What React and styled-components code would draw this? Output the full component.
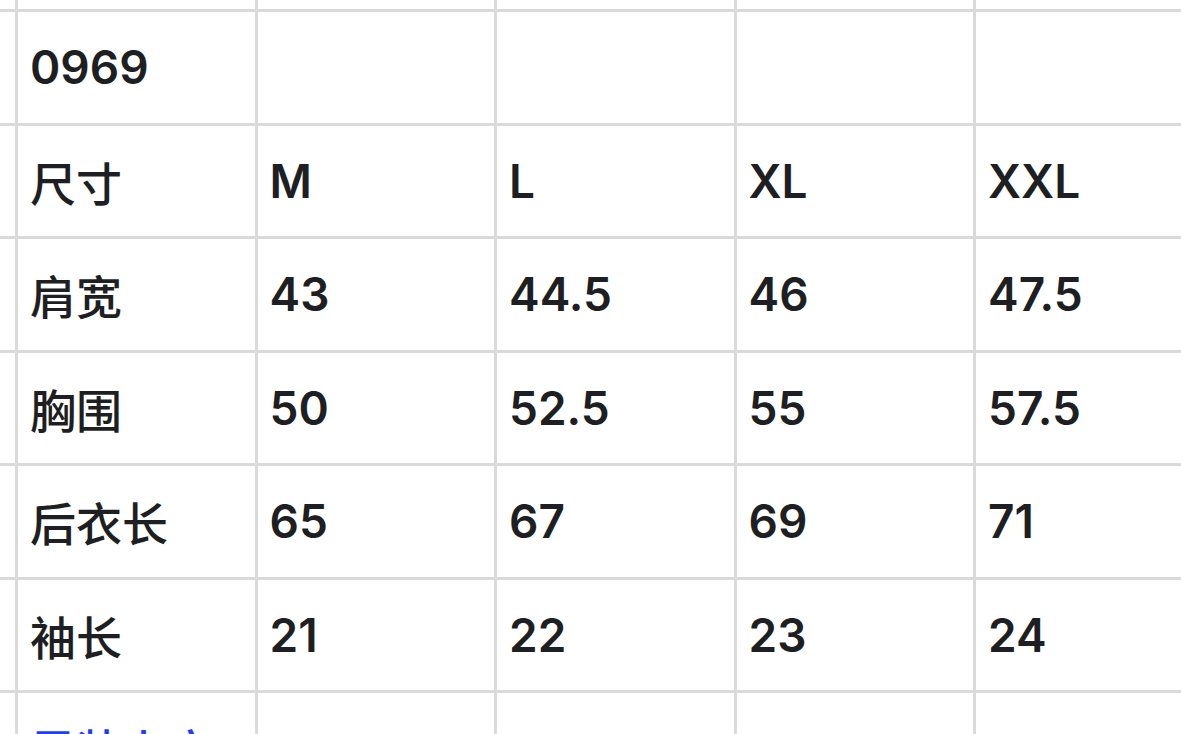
import styled, { createGlobalStyle } from 'styled-components';

const GlobalStyle = createGlobalStyle`
  html, body {
    margin: 0;
    padding: 0;
    background: #ffffff;
    overflow: hidden;
  }
  body {
    font-family: Inter, "Noto Sans CJK SC", sans-serif;
  }
`;

const rows = [
  { head: '', cells: ['', '', '', ''], partial: true },
  { head: '0969', cells: ['', '', '', ''] },
  { head: '尺寸', cells: ['M', 'L', 'XL', 'XXL'] },
  { head: '肩宽', cells: ['43', '44.5', '46', '47.5'] },
  { head: '胸围', cells: ['50', '52.5', '55', '57.5'] },
  { head: '后衣长', cells: ['65', '67', '69', '71'] },
  { head: '袖长', cells: ['21', '22', '23', '24'] },
  { head: '男装上衣', cells: ['', '', '', ''], link: true },
];

const Sheet = styled.div`
  display: grid;
  grid-template-columns: 18px repeat(5, 239.5px);
  grid-auto-rows: 113.5px;
  grid-template-rows: 12px;
  width: max-content;
  height: 734px;
  overflow: hidden;
`;

const Cell = styled.div`
  box-sizing: border-box;
  border-right: 3px solid #dadada;
  border-bottom: 3px solid #dadada;
  display: flex;
  align-items: center;
  padding-left: 12px;
  font-size: 46px;
  font-weight: ${(p) => (p.$cjk ? 500 : 600)};
  color: ${(p) => (p.$link ? '#1f3ff0' : '#1d1f22')};
  white-space: nowrap;
  overflow: hidden;
`;

const Stub = styled.div`
  box-sizing: border-box;
  border-right: 3px solid #dadada;
  border-bottom: 3px solid #dadada;
`;

export default function App() {
  return (
    <>
      <GlobalStyle />
      <Sheet>
        {rows.map((row, i) => (
          <Row key={i} row={row} />
        ))}
      </Sheet>
    </>
  );
}

const isCjk = (s) => /[\u4e00-\u9fff]/.test(s);

function Row({ row }) {
  if (row.partial) {
    return (
      <>
        <Stub />
        <Stub />
        <Stub />
        <Stub />
        <Stub />
        <Stub />
      </>
    );
  }
  return (
    <>
      <Stub />
      <Cell $link={row.link} $cjk={isCjk(row.head)}>{row.head}</Cell>
      {row.cells.map((c, j) => (
        <Cell key={j}>{c}</Cell>
      ))}
    </>
  );
}
